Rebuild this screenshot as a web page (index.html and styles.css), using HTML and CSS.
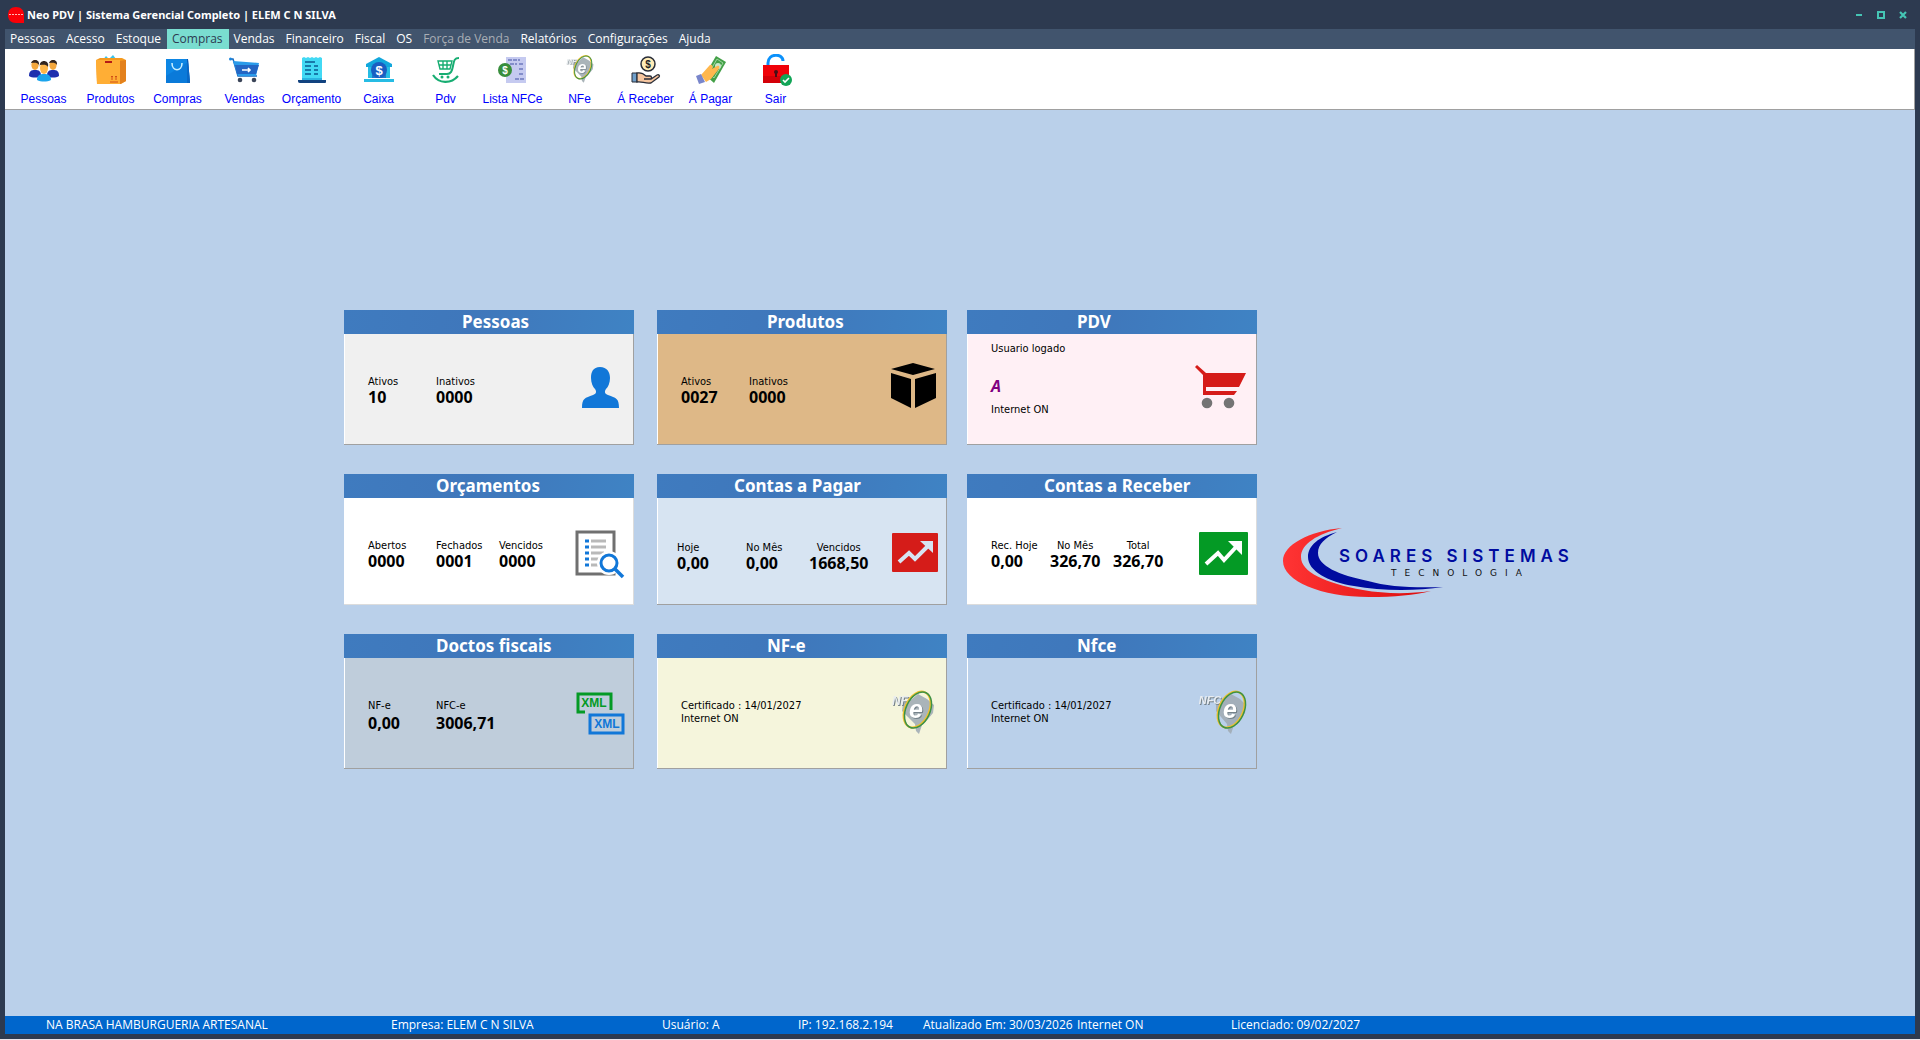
FILE: index.html
```html
<!DOCTYPE html>
<html lang="pt-BR">
<head>
<meta charset="utf-8">
<title>Neo PDV | Sistema Gerencial Completo</title>
<link rel="stylesheet" href="styles.css">
</head>
<body>
<div class="window">
  <header class="titlebar">
    <svg class="app-icon" viewBox="0 0 16 16" aria-hidden="true"><path d="M8 0C13 0 16 3 16 8v8H8C3 16 0 13 0 8s3-8 8-8z" fill="#fb0007"/><path d="M1 7.500h14" stroke="#ffb9b4" stroke-dasharray="2 1"/></svg>
    <h1 class="window-title">Neo PDV | Sistema Gerencial Completo | ELEM C N SILVA</h1>
    <div class="window-controls">
      <button type="button" aria-label="Minimizar"><svg viewBox="0 0 8 8"><path d="M1 4h6" stroke-width="2"/></svg></button>
      <button type="button" aria-label="Maximizar"><svg viewBox="0 0 8 8"><path d="M1 1h6v6H1z" stroke-width="2"/></svg></button>
      <button type="button" aria-label="Fechar"><svg viewBox="0 0 8 8"><path d="M1 1l6 6M7 1L1 7" stroke-width="2.200"/></svg></button>
    </div>
  </header>

  <nav class="menubar" aria-label="Menu principal">
    <button type="button">Pessoas</button>
    <button type="button">Acesso</button>
    <button type="button">Estoque</button>
    <button type="button" class="active">Compras</button>
    <button type="button">Vendas</button>
    <button type="button">Financeiro</button>
    <button type="button">Fiscal</button>
    <button type="button">OS</button>
    <button type="button" disabled>Força de Venda</button>
    <button type="button">Relatórios</button>
    <button type="button">Configurações</button>
    <button type="button">Ajuda</button>
  </nav>

  <div class="toolbar" role="toolbar" aria-label="Atalhos">
    <button type="button" class="tool">
      <svg viewBox="0 0 32 32"><g id="person"><path d="M1 22c0-5 2-6 6-6s6 1 6 6c-3 2-9 2-12 0z" fill="#1d2fae"/><ellipse cx="7" cy="11" rx="3.600" ry="5" fill="#f4a73c"/><path d="M3 11c-1-6 9-7 8 0-2-3-5-2-8-2z" fill="#33251f"/></g><use href="#person" x="18"/><path d="M9 26c0-5 3-6 7-6s7 1 7 6c-4 2-10 2-14 0z" fill="#1ba4ec"/><ellipse cx="16" cy="14" rx="4" ry="6" fill="#ffb648"/><path d="M12 13c-2-8 10-8 8 0-2-3-5-2-8-2z" fill="#33251f"/></svg>
      Pessoas</button>
    <button type="button" class="tool">
      <svg viewBox="0 0 32 32"><path d="M7 7l4-5 3 3 4-4 3 4 3 1v3H7z" fill="#38c4ec"/><path d="M1 6l4-2h22l4 2v21l-5 3H2z" fill="#f59a1f"/><path d="M1 6h24v24H2z" fill="#ffae35"/><path d="M25 7l6-1v21l-6 3z" fill="#e3811d"/><path d="M10 8h7" stroke="#b51a16" stroke-width="2"/><path d="M17 26v-4m-1 1l1-1 1 1m3 3v-4m-1 1l1-1 1 1m-7 5h8" fill="none" stroke="#d04e17"/></svg>
      Produtos</button>
    <button type="button" class="tool">
      <svg viewBox="0 0 32 32"><path d="M4 5h22l2 24H4z" fill="#0d86e4"/><path d="M25 5h1l2 24h-3z" fill="#0957b4"/><path d="M4 22L26 8l2 21H4z" fill="#0873d2" opacity=".6"/><path d="M10 9c0 9 10 9 10 0" fill="none" stroke="#c6efff" stroke-width="1.600"/></svg>
      Compras</button>
    <button type="button" class="tool">
      <svg viewBox="0 0 32 32"><path d="M1 5h3l5 17h19" fill="none" stroke="#1769be" stroke-width="1.500"/><circle cx="1.500" cy="5" r="1.500" fill="#1b86dd"/><path d="M4 7l26 2-3 13H9z" fill="#2a9bea"/><path d="M6 11h24l-3 9H8z" fill="#2466c4"/><path d="M13 16h8m-2-2l2 2-2 2" fill="none" stroke="#fff" stroke-width="1.600"/><circle cx="11" cy="26" r="2.300" fill="#3b4558"/><circle cx="25" cy="26" r="2.300" fill="#3b4558"/></svg>
      Vendas</button>
    <button type="button" class="tool">
      <svg viewBox="0 0 32 32"><path d="M6 4l2-1 2 1 2-1 2 1 2-1 2 1 2-1 2 1 2-1 2 1v22H6z" fill="#42d9f4"/><path d="M2 26h28v2c0 1-1 1-2 1H4c-2 0-2-1-2-3z" fill="#12427f"/><path d="M6 24h20v2H6z" fill="#2bb4e2"/><path d="M9 8h10M9 12h6m3 0h4M9 16h6m3 0h4M9 20h6m3 0h4" stroke="#0b5991" stroke-width="1.500"/></svg>
      Orçamento</button>
    <button type="button" class="tool">
      <svg viewBox="0 0 32 32"><path d="M16 3l13 7v3H3v-3z" fill="#12a7dc"/><path d="M5 13h22v11H5z" fill="#1e78cb"/><path d="M5 13h4v11H5zm18 0h4v11h-4zM1 25h30v3H1z" fill="#26bce4"/><circle cx="16" cy="16" r="8" fill="#1a5ec2"/><text x="16" y="21" class="icon-text" font-size="13" fill="#fff">$</text></svg>
      Caixa</button>
    <button type="button" class="tool">
      <svg viewBox="0 0 32 32"><g fill="none" stroke="#17ad72"><path d="M29 4c-5 0-5 3-6 8s-2 8-6 8H9" stroke-width="2"/><path d="M8 7h14l-2 8H10zM9 11h12M13 7v8m4-8v8" stroke-width="1.400"/><path d="M3 21c6 9 18 9 25 1" stroke-width="2.200"/></g><circle cx="12" cy="23" r="1.500" fill="#17ad72"/><circle cx="18" cy="23" r="1.500" fill="#17ad72"/></svg>
      Pdv</button>
    <button type="button" class="tool">
      <svg viewBox="0 0 32 32"><path d="M9 3h20v26H9z" fill="#c5caf0"/><path d="M11 6h12m-10 4h7m2 0h4m-4 5h4m-4 5h4m-8 5h9" stroke="#6d79bd" stroke-width="1.600" stroke-dasharray="4 1"/><circle cx="8" cy="16" r="7" fill="#388e3c"/><text x="8" y="20" class="icon-text" font-size="10" fill="#fff">$</text></svg>
      Lista NFCe</button>
    <button type="button" class="tool">
      <svg viewBox="0 0 50 50"><use href="#nfe-mark"/></svg>
      NFe</button>
    <button type="button" class="tool tool-narrow">
      <svg viewBox="0 0 32 32"><circle cx="18" cy="10" r="7" fill="#ffedb8" stroke="#292d38" stroke-width="1.500"/><text x="18" y="14" class="icon-text" font-size="10" fill="#222">$</text><path d="M2 19h5v9H2z" fill="#6f9fca" stroke="#292d38"/><path d="M7 19c5-1 7 1 9 3h4c2 0 2 3 0 3h-6 7l6-4c2-1 3 1 2 2l-8 6c-6 1-9-2-14-1z" fill="#f6c6a0" stroke="#292d38" stroke-width="1.300"/></svg>
      Á Receber</button>
    <button type="button" class="tool tool-narrow">
      <svg viewBox="0 0 32 32"><path d="M10 21L21 2l10 6-12 21z" fill="#43a047"/><path d="M14 19l8-14 6 4-9 15z" fill="none" stroke="#9bd49d"/><circle cx="23" cy="12" r="3" fill="#c8e6c9"/><path d="M6 21l8-9c2-3 5 0 3 3l5-3c3-1 3 2 1 4l-7 9-5 3z" fill="#ffb74d"/><path d="M1 22l5-2 4 8-6 2z" fill="#7986cb"/></svg>
      Á Pagar</button>
    <button type="button" class="tool tool-narrow">
      <svg viewBox="0 0 32 32"><path d="M8 12V9c0-10 15-10 15-2" fill="none" stroke="#0b91fb" stroke-width="3"/><path d="M3 11h26v18H3z" fill="#f00209"/><path d="M3 22h26v7H3z" fill="#d40008"/><circle cx="16" cy="18" r="2" fill="#481016"/><path d="M16 18v5" stroke="#481016" stroke-width="2"/><circle cx="26" cy="26" r="6" fill="#12a557"/><path d="M23 26l2 2 4-4" fill="none" stroke="#fff" stroke-width="1.600"/></svg>
      Sair</button>
  </div>

  <main class="workspace">
    <div class="cards">
      <article class="card pessoas">
        <h2>Pessoas</h2>
        <div class="card-body">
          <dl class="stats"><div><dt>Ativos</dt><dd>10</dd></div><div><dt>Inativos</dt><dd>0000</dd></div></dl>
          <svg class="card-icon" viewBox="0 0 50 50" aria-hidden="true"><path d="M25 2c7 0 10 5 10 11 0 5-2 9-4 11-2 3-1 5 2 6 8 3 11 3 11 13H7c0-10 3-10 11-13 3-1 4-3 2-6-2-2-4-6-4-11C16 7 18 2 25 2z" fill="#1177d8"/></svg>
        </div>
      </article>
      <article class="card produtos">
        <h2>Produtos</h2>
        <div class="card-body">
          <dl class="stats"><div><dt>Ativos</dt><dd>0027</dd></div><div><dt>Inativos</dt><dd>0000</dd></div></dl>
          <svg class="card-icon" viewBox="0 0 50 50" aria-hidden="true"><path d="M25-2l22 6-22 6L3 4zM3 8l20 6v29L3 33zM48 8l-21 6v29l21-10z"/></svg>
        </div>
      </article>
      <article class="card pdv">
        <h2>PDV</h2>
        <div class="card-body">
          <div class="login"><p>Usuario logado</p><p class="user">A</p><p>Internet ON</p></div>
          <svg class="card-icon" viewBox="0 0 50 50" aria-hidden="true"><path d="M-3 2l8 8v20h31l3-4H8v-4h33l7-14H8l-9-8z" fill="#d51c19"/><circle cx="9" cy="38" r="5.300" fill="#747474"/><circle cx="31" cy="38" r="5.300" fill="#747474"/></svg>
        </div>
      </article>

      <article class="card orcamentos">
        <h2>Orçamentos</h2>
        <div class="card-body">
          <dl class="stats"><div><dt>Abertos</dt><dd>0000</dd></div><div><dt>Fechados</dt><dd>0001</dd></div><div><dt>Vencidos</dt><dd>0000</dd></div></dl>
          <svg class="card-icon" viewBox="0 0 50 50" aria-hidden="true"><path d="M2 3h37v42H2z" fill="#fff" stroke="#707070" stroke-width="3"/><path d="M16 12h15M16 18h15M16 24h13M16 30h9M16 36h7" stroke="#b9b9b9" stroke-width="3"/><path d="M10 12h4m-4 6h4m-4 6h4m-4 6h4m-4 6h4" stroke="#1177d8" stroke-width="3"/><circle cx="34" cy="34" r="12" fill="#fff"/><circle cx="34" cy="34" r="8" fill="#fff" stroke="#1177d8" stroke-width="3"/><path d="M40 40l8 8" stroke="#1177d8" stroke-width="3.500"/></svg>
        </div>
      </article>
      <article class="card pagar">
        <h2>Contas a Pagar</h2>
        <div class="card-body">
          <dl class="stats"><div><dt>Hoje</dt><dd>0,00</dd></div><div><dt>No Mês</dt><dd>0,00</dd></div><div class="centered"><dt>Vencidos</dt><dd>1668,50</dd></div></dl>
          <svg class="card-icon" viewBox="0 0 50 50" aria-hidden="true"><rect x="4" y="4" width="46" height="39" rx="1" fill="#d51c19"/><path d="M11 33l10-9 6 6 13-13" fill="none" stroke="#d7e4f2" stroke-width="4"/><path d="M32 12h13v12z" fill="#d7e4f2"/></svg>
        </div>
      </article>
      <article class="card receber">
        <h2>Contas a Receber</h2>
        <div class="card-body">
          <dl class="stats"><div><dt>Rec. Hoje</dt><dd>0,00</dd></div><div class="centered"><dt>No Mês</dt><dd>326,70</dd></div><div class="centered"><dt>Total</dt><dd>326,70</dd></div></dl>
          <svg class="card-icon" viewBox="0 0 50 50" aria-hidden="true"><rect x="1" y="3" width="49" height="43" rx="1" fill="#049a25"/><path d="M8 35l12-11 6 7 13-14" fill="none" stroke="#fff" stroke-width="4"/><path d="M30 12h14v14z" fill="#fff"/></svg>
        </div>
      </article>

      <article class="card doctos">
        <h2>Doctos fiscais</h2>
        <div class="card-body">
          <dl class="stats"><div><dt>NF-e</dt><dd>0,00</dd></div><div><dt>NFC-e</dt><dd>3006,71</dd></div></dl>
          <svg class="card-icon" viewBox="0 0 50 50" aria-hidden="true"><path d="M10 23H3V5h33v16" fill="none" stroke="#049a25" stroke-width="3"/><text x="19" y="18" class="icon-text" font-size="12" fill="#049a25">XML</text><path d="M15 26h33v18H15z" fill="none" stroke="#1177d8" stroke-width="3"/><text x="32" y="39" class="icon-text" font-size="12" fill="#1177d8">XML</text></svg>
        </div>
      </article>
      <article class="card nfe">
        <h2>NF-e</h2>
        <div class="card-body">
          <div class="certificate"><p>Certificado : 14/01/2027</p><p>Internet ON</p></div>
          <svg class="card-icon" viewBox="0 0 50 50" aria-hidden="true"><g id="nfe-mark"><path d="M15 14l9-4 6-5 9 5 7 6-1 8-5 6-6 6-3 9-3-3-1-7-7-7-6-6z" fill="#aab4b9"/><text x="12" y="16" class="icon-text mark" font-size="12" fill="#e9edef">NF</text><g transform="rotate(25 30 21)" fill="none"><ellipse cx="29" cy="21" rx="12" ry="19" stroke="#f0c22c" stroke-width="2"/><ellipse cx="30" cy="21" rx="12" ry="19" stroke="#3d9147" stroke-width="1.500"/></g><text x="28" y="29" class="icon-text mark" font-size="25" fill="#fff">e</text></g></svg>
        </div>
      </article>
      <article class="card nfce">
        <h2>Nfce</h2>
        <div class="card-body">
          <div class="certificate"><p>Certificado : 14/01/2027</p><p>Internet ON</p></div>
          <svg class="card-icon" viewBox="0 0 50 50" aria-hidden="true"><path d="M18 14l9-4 6-5 9 5 6 6-1 8-5 6-6 6-3 9-3-3-1-7-6-7-5-6z" fill="#a3afba"/><text x="12" y="15" class="icon-text mark" font-size="11" fill="#e9edf1">NFC</text><g transform="rotate(25 34 21)" fill="none"><ellipse cx="33" cy="21" rx="12" ry="19" stroke="#f0c22c" stroke-width="2"/><ellipse cx="34" cy="21" rx="12" ry="19" stroke="#3d9147" stroke-width="1.500"/></g><text x="32" y="29" class="icon-text mark" font-size="25" fill="#fff">e</text></svg>
        </div>
      </article>
    </div>

    <svg class="brand" viewBox="0 0 299 76" role="img" aria-label="Soares Sistemas Tecnologia">
      <defs><linearGradient id="red"><stop offset="0" stop-color="#ff3434"/><stop offset="1" stop-color="#dc0d0d"/></linearGradient></defs>
      <path d="M65 3C32 6 6 20 6 36c0 20 38 36 86 36 26 0 45-2 62-6-22 3-46 3-68-1C48 58 24 47 24 32 24 19 40 9 65 3z" fill="url(#red)"/>
      <path d="M60 7C42 12 31 20 31 32c0 14 20 25 46 29 27 5 62 5 89 1-28 1-55 0-75-6C62 50 41 41 41 28c0-9 7-15 19-21z" fill="#000b9f"/>
      <text x="62" y="37" class="brand-name">SOARES SISTEMAS</text>
      <text x="114" y="51" class="brand-sub">TECNOLOGIA</text>
    </svg>
  </main>

  <footer class="statusbar">
    <span class="company">NA BRASA HAMBURGUERIA ARTESANAL</span>
    <span class="owner">Empresa: ELEM C N SILVA</span>
    <span class="operator">Usuário: A</span>
    <span class="address">IP: 192.168.2.194</span>
    <span class="updated">Atualizado Em: 30/03/2026</span>
    <span class="network">Internet ON</span>
    <span class="license">Licenciado: 09/02/2027</span>
  </footer>
</div>
</body>
</html>
```
FILE: styles.css
```css
* { box-sizing: border-box; }

body {
  margin: 0;
  background: #e9e4ea;
  font-family: "Open Sans", "Noto Sans", sans-serif;
  font-size: 12px;
}

h1, h2, p, dl, dd { margin: 0; }
button { border: 0; padding: 0; background: none; font: inherit; color: inherit; }

.window {
  display: flex;
  flex-direction: column;
  min-height: calc(100vh - 1px);
  padding: 0 5px 5px;
  background: #2d3a50;
}

/* Title bar */
.titlebar {
  display: flex;
  align-items: center;
  height: 29px;
  padding: 0 8px 0 3px;
  color: #fff;
}
.app-icon { width: 16px; height: 16px; margin-right: 3px; }
.window-title { font: bold 11px "Noto Sans", sans-serif; }
.window-controls { display: flex; gap: 14px; margin-left: auto; }
.window-controls button { width: 8px; height: 8px; display: flex; }
.window-controls svg { width: 8px; height: 8px; fill: none; stroke: #45c5b4; }

/* Menu */
.menubar { display: flex; height: 20px; background: #41546d; color: #fff; }
.menubar button { padding: 0 6px 0 5px; line-height: 20px; }
.menubar .active { background: #7addd0; color: #2d3a50; }
.menubar button:disabled { color: #a9aeb5; }

/* Toolbar */
.toolbar {
  display: flex;
  min-height: 61px;
  padding: 5px 5px 0;
  background: #fff;
  border-right: 1px solid #a0a0a0;
  border-bottom: 1px solid #a0a0a0;
}
.tool {
  display: flex;
  flex-direction: column;
  align-items: center;
  gap: 5px;
  width: 67px;
  height: 54px;
  font: 12px/16px "Liberation Sans", Arial, sans-serif;
  color: #0000ff;
  white-space: nowrap;
}
.tool-narrow { width: 65px; }
.tool svg { width: 32px; height: 32px; }

.icon-text { font-family: "Liberation Sans", Arial, sans-serif; font-weight: bold; text-anchor: middle; }
.mark { font-style: italic; filter: drop-shadow(1px 1px 0 #75828a); }

/* Workspace */
.workspace {
  flex: 1;
  display: flex;
  justify-content: center;
  align-items: flex-start;
  gap: 20px;
  padding: 200px 0 40px;
  background: #bad0ea;
}
.cards {
  display: grid;
  grid-template-columns: 313px 310px 290px;
  grid-template-rows: 135px 131px 135px;
  row-gap: 29px;
}
.card {
  --indent: 110px;
  --stat-1: 68px;
  --stat-2: 63px;
  width: 290px;
  border: solid #a0a0a0;
  border-width: 0 1px 1px 0;
  box-shadow: inset 1px 0 #fff;
}
.card h2 {
  height: 24px;
  margin-right: -1px;
  padding-left: var(--indent);
  background: linear-gradient(100deg, #3f7bbf, #3f77bb 45%, #3f83c4);
  color: #fff;
  font: bold 17px/24px "Noto Sans", sans-serif;
  white-space: nowrap;
}
.card-body { display: flex; padding: 0 8px 0 24px; }
.card-icon { width: 50px; height: 50px; margin: 31px 0 0 auto; overflow: visible; }

.stats { display: grid; grid-template-columns: var(--stat-1) var(--stat-2) auto; padding-top: 40px; }
.stats dt { font: 11px/15px "DejaVu Sans Condensed", Tahoma, sans-serif; }
.stats dd { font: bold 16px/16px "Noto Sans", sans-serif; }
.stats .centered { text-align: center; width: max-content; }

.certificate, .login { font: 11px/13px "DejaVu Sans Condensed", Tahoma, sans-serif; }
.certificate { padding-top: 41px; }
.login { padding-top: 8px; }
.login .user { margin: 21px 0 7px; font: italic bold 16px/20px "Noto Sans", sans-serif; color: #800080; }

.pessoas { --indent: 118px; background: #f0f0f0; }
.produtos { background: #deb887; }
.pdv { background: #fff0f5; }
.orcamentos { --indent: 92px; background: #fff; }
.pagar { --indent: 77px; --stat-1: 69px; background: #d7e4f2; }
.pagar .card-body { padding-left: 20px; }
.pagar .stats { padding-top: 42px; }
.receber { --indent: 77px; --stat-1: 59px; background: #fff; }
.orcamentos, .receber { border-color: #dcdcdc; }
.doctos { --indent: 92px; background: #bfcddb; }
.doctos dd { line-height: 20px; }
.nfe { background: #f5f5dc; }
.nfce { background: #bad0ea; }

/* Brand */
.brand { width: 299px; height: 76px; margin-top: 215px; }
.brand-name { font: 600 17px Inter, sans-serif; letter-spacing: 5px; fill: #000b9f; }
.brand-sub { font: 9px "DejaVu Sans", sans-serif; letter-spacing: 8px; fill: #111; }

/* Status bar */
.statusbar {
  display: flex;
  height: 18px;
  padding-left: 41px;
  background: #0066cc;
  color: #fff;
  line-height: 18px;
  white-space: nowrap;
}
.statusbar .company { width: 345px; }
.statusbar .owner { width: 271px; }
.statusbar .operator { width: 136px; }
.statusbar .address { width: 125px; }
.statusbar .updated { width: 154px; }
.statusbar .network { width: 154px; }
```
